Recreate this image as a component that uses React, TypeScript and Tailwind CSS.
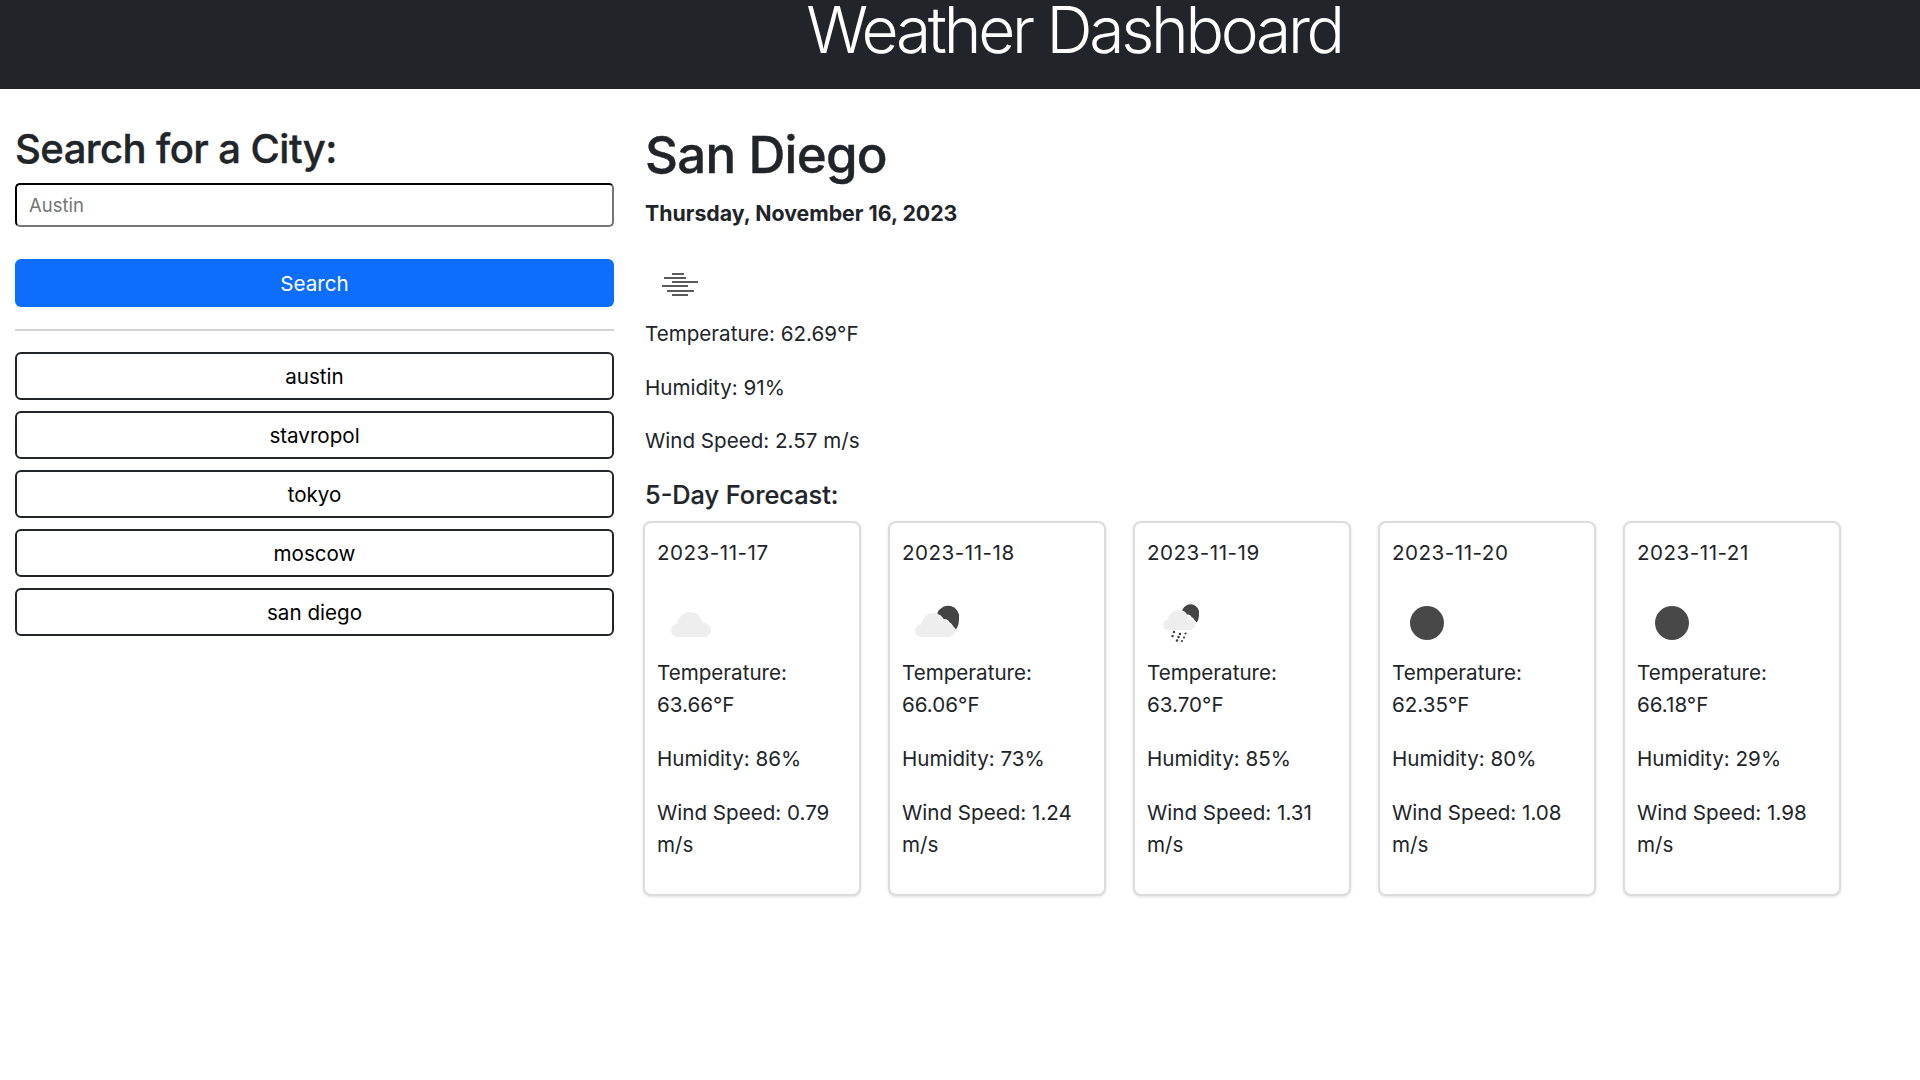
const font = 'font-["Inter","Noto_Sans",sans-serif]';

const cities = ['austin', 'stavropol', 'tokyo', 'moscow', 'san diego'];

type IconName = 'clouds' | 'partly' | 'rain' | 'clear';

const forecast: { date: string; icon: IconName; temp: string; humidity: string; wind: string }[] = [
  { date: '2023-11-17', icon: 'clouds', temp: '63.66°F', humidity: '86%', wind: '0.79' },
  { date: '2023-11-18', icon: 'partly', temp: '66.06°F', humidity: '73%', wind: '1.24' },
  { date: '2023-11-19', icon: 'rain', temp: '63.70°F', humidity: '85%', wind: '1.31' },
  { date: '2023-11-20', icon: 'clear', temp: '62.35°F', humidity: '80%', wind: '1.08' },
  { date: '2023-11-21', icon: 'clear', temp: '66.18°F', humidity: '29%', wind: '1.98' },
];

const MistIcon = () => (
  <svg width="70" height="70" viewBox="0 0 70 70" className="block">
    <g fill="#5a5a5a">
      <rect x="27" y="24" width="12" height="2" />
      <rect x="19" y="28" width="22" height="2" />
      <rect x="27" y="32" width="26" height="2" />
      <rect x="17" y="36" width="26" height="2" />
      <rect x="22" y="41" width="27" height="2" />
      <rect x="27" y="45" width="16" height="2" />
    </g>
  </svg>
);

const Cloud = ({ x, y, w, h }: { x: number; y: number; w: number; h: number }) => (
  <g transform={`translate(${x} ${y}) scale(${w / 40} ${h / 25})`}>
    <path
      d="M7 25C3 25 0 22 0 18.500C0 15 2.500 12.500 6 12C7 5 12.500 0 19 0C25.500 0 30 4.500 31.500 10.500C36.500 11 40 14 40 18.500C40 22.500 37 25 33 25Z"
      fill="#eeeeee"
    />
  </g>
);

const Moon = ({ x, y, size }: { x: number; y: number; size: number }) => (
  <g transform={`translate(${x} ${y}) scale(${size / 22})`}>
    <path
      d="M0.500 5A11.200 11.200 0 0 1 22 11C22 15 21 19 19 21.500L16 18C15 16 14 15 12.500 14.500C12 12 9 10.500 6.500 11C6 9 3 6.500 0.500 6Z"
      fill="#444444"
    />
  </g>
);

const WeatherIcon = ({ name }: { name: IconName }) => (
  <svg width="70" height="70" viewBox="0 0 70 70" className="block">
    {name === 'clouds' && <Cloud x={14} y={24} w={40} h={25} />}
    {name === 'partly' && (
      <>
        <Cloud x={13} y={25} w={40} h={24} />
        <Moon x={35} y={20} size={22} />
      </>
    )}
    {name === 'rain' && (
      <>
        <Cloud x={16} y={22} w={32} h={20} />
        <Moon x={35} y={18} size={17} />
        <g fill="#3a3a3a">
          <circle cx="27" cy="44" r="1.200" />
          <circle cx="33" cy="46" r="1.200" />
          <circle cx="38.500" cy="45.500" r="1.100" />
          <circle cx="25.500" cy="48" r="1.200" />
          <circle cx="31.500" cy="49" r="1.200" />
          <circle cx="37" cy="49.500" r="1.100" />
          <circle cx="30" cy="52.500" r="1.200" />
          <circle cx="35" cy="53" r="1.100" />
        </g>
      </>
    )}
    {name === 'clear' && <circle cx="35" cy="35" r="17" fill="#484848" />}
  </svg>
);

const Stat = ({ children, gap = 'mb-[21.500px]' }: { children: React.ReactNode; gap?: string }) => (
  <p className={`leading-[32px] ${gap}`}>{children}</p>
);

export default function App() {
  return (
    <div className={`min-h-screen bg-white text-[#212529] text-[20.600px] ${font}`}>
      <header className="flex h-[89px] justify-center overflow-hidden bg-[#212529] pl-[228px]">
        <h1 className="text-[64px] font-light leading-[60px] tracking-[-3.250px] text-white">Weather Dashboard</h1>
      </header>

      <main className="flex pl-[15px] pt-[36px]">
        <aside className="w-[599px] shrink-0">
          <h2 className="text-[40px] font-medium leading-[48px] tracking-[-0.550px] [-webkit-text-stroke:0.4px_#212529]">
            Search for a City:
          </h2>
          <input
            placeholder="Austin"
            className="mt-[10px] block h-[44px] w-full rounded-[5px] border-2 border-t-black border-l-black border-r-[#767676] border-b-[#767676] px-[12px] text-[18.500px] placeholder:text-[#757575] outline-none"
          />
          <button className="mt-[32px] h-[48px] w-full rounded-[6px] bg-[#0d6efd] pt-[2px] text-center text-[20.600px] text-white">
            Search
          </button>
          <hr className="mt-[22px] h-[2px] border-0 bg-[#d3d3d3]" />
          <div className="mt-[21px] flex flex-col gap-[11px]">
            {cities.map((city) => (
              <button
                key={city}
                className="h-[48px] w-full rounded-[6px] border-2 border-[#212529] bg-white pt-[2px] text-center text-[20.600px] text-black"
              >
                {city}
              </button>
            ))}
          </div>
        </aside>

        <section className="ml-[31px] flex-1">
          <h2 className="text-[51px] font-medium leading-[60px] tracking-[-0.700px] [-webkit-text-stroke:0.4px_#212529]">
            San Diego
          </h2>
          <p className="mt-[12px] text-[21.300px] font-bold leading-[32px]">Thursday, November 16, 2023</p>
          <div className="mt-[20px]">
            <MistIcon />
          </div>
          <div className="-mt-[1px]">
            <Stat>Temperature: 62.69°F</Stat>
            <Stat>Humidity: 91%</Stat>
            <Stat>Wind Speed: 2.57 m/s</Stat>
          </div>
          <h3 className="text-[25.300px] font-medium leading-[32px] [-webkit-text-stroke:0.2px_#212529]">
            5-Day Forecast:
          </h3>
          <div className="-ml-[2px] mt-[10px] flex gap-[27px]">
            {forecast.map((day) => (
              <div
                key={day.date}
                className="h-[375px] w-[218px] rounded-[8px] border-2 border-[#dcdcdc] bg-white px-[12px] pt-[14px] shadow-[0_1px_3px_rgba(0,0,0,0.12)]"
              >
                <p className="leading-[32px] tracking-[0.500px]">{day.date}</p>
                <div className="mt-[19px]">
                  <WeatherIcon name={day.icon} />
                </div>
                <div className="-mt-[1px]">
                  <Stat gap="mb-[22px]">
                    Temperature:
                    <br />
                    {day.temp}
                  </Stat>
                  <Stat gap="mb-[22px]">Humidity: {day.humidity}</Stat>
                  <Stat gap="mb-0">
                    Wind Speed: {day.wind}
                    <br />
                    m/s
                  </Stat>
                </div>
              </div>
            ))}
          </div>
        </section>
      </main>
    </div>
  );
}
